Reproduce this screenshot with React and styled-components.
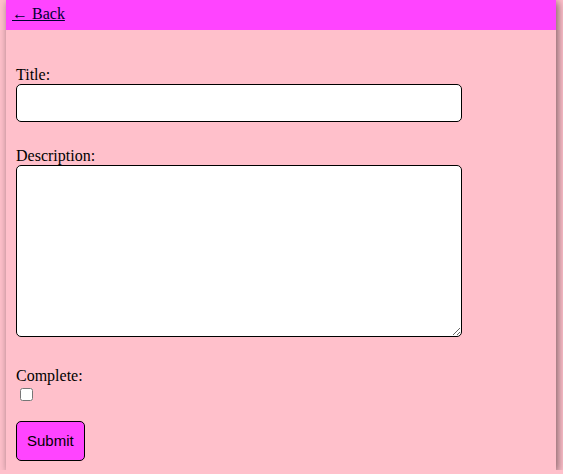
import React from "react";
import styled, { createGlobalStyle } from "styled-components";

const Global = createGlobalStyle`
  html, body {
    margin: 0;
    padding: 0;
    background: #ffc0cb;
    font-family: "Liberation Serif", "Times New Roman", serif;
    font-size: 16px;
  }
`;

const Card = styled.div`
  width: 550px;
  margin: 0 0 0 6px;
  background: #ffc0cb;
  box-shadow: 2px 2px 8px rgba(0, 0, 0, 0.5);
`;

const Header = styled.nav`
  background: #ff44ff;
  height: 30px;
  box-sizing: border-box;
  padding: 5px 6px;
`;

const BackLink = styled.a`
  color: #000033;
  text-decoration: underline;
`;

const Form = styled.form`
  padding: 10px 10px 9px;
`;

const Field = styled.div`
  margin-top: 25.6px;
`;

const Label = styled.label`
  display: block;
`;

const TextInput = styled.input`
  box-sizing: border-box;
  width: 446px;
  height: 38px;
  margin: 0;
  border: 1px solid #000;
  border-radius: 5px;
  background: #fff;
  font-size: 16px;
`;

const TextArea = styled.textarea`
  box-sizing: border-box;
  width: 446px;
  height: 172px;
  margin: 0;
  border: 1px solid #000;
  border-radius: 5px;
  background: #fff;
`;

const Check = styled.input`
  width: 13px;
  height: 13px;
  margin: 3px 3px 3px 4px;
`;

const SubmitButton = styled.button`
  display: block;
  margin-top: 16px;
  padding: 10px;
  height: 40px;
  box-sizing: border-box;
  background: #ff44ff;
  border: 1px solid #000;
  border-radius: 5px;
  font-family: "Liberation Sans", Arial, sans-serif;
  font-size: 15px;
  line-height: 18px;
  color: #000;
`;

export default function App() {
  return (
    <>
      <Global />
      <Card>
        <Header>
          <BackLink href="#">← Back</BackLink>
        </Header>
        <Form onSubmit={(e) => e.preventDefault()}>
          <Field>
            <Label htmlFor="title">Title:</Label>
            <TextInput id="title" type="text" />
          </Field>
          <Field>
            <Label htmlFor="description">Description:</Label>
            <TextArea id="description" />
          </Field>
          <Field>
            <Label htmlFor="complete">Complete:</Label>
            <Check id="complete" type="checkbox" />
          </Field>
          <SubmitButton type="submit">Submit</SubmitButton>
        </Form>
      </Card>
    </>
  );
}
